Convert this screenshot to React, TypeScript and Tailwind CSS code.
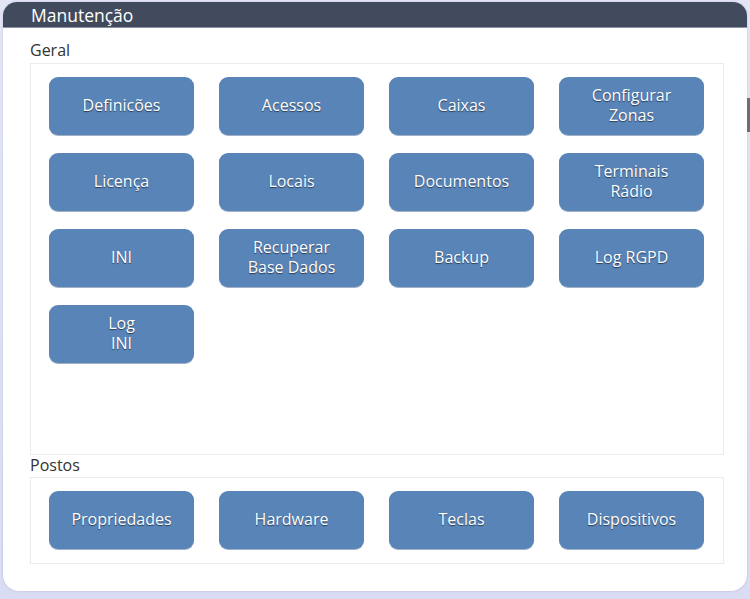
import React from "react";

const geral: string[][] = [
  ["Definicões"],
  ["Acessos"],
  ["Caixas"],
  ["Configurar", "Zonas"],
  ["Licença"],
  ["Locais"],
  ["Documentos"],
  ["Terminais", "Rádio"],
  ["INI"],
  ["Recuperar", "Base Dados"],
  ["Backup"],
  ["Log RGPD"],
  ["Log", "INI"],
];

const postos: string[][] = [["Propriedades"], ["Hardware"], ["Teclas"], ["Dispositivos"]];

function Tile({ lines }: { lines: string[] }) {
  return (
    <button className="h-[58px] w-[145px] rounded-[9px] bg-[#5984b8] shadow-[0_1px_0_#9fb0c8] flex flex-col items-center justify-center pb-[3px] text-white text-[16px] leading-[20px] [text-shadow:0_1px_1px_rgba(0,0,0,0.55)]">
      {lines.map((l) => (
        <span key={l}>{l}</span>
      ))}
    </button>
  );
}

export default function App() {
  return (
    <div
      className="w-[750px] h-[599px] overflow-hidden bg-gradient-to-b from-[#e4e6f6] to-[#d9dcf3] pt-[2px] px-[3px] relative"
      style={{ fontFamily: '"Open Sans", "Noto Sans", sans-serif' }}
    >
      <div className="absolute right-0 top-[98px] w-[3px] h-[34px] bg-[#6b6e78]" />
      <div className="h-[589px] bg-white rounded-t-[14px] rounded-b-[16px] flex flex-col overflow-hidden shadow-[0_0_2px_rgba(120,120,160,0.4)]">
        <div className="h-[26px] bg-[#414b5d] border-b border-[#8a93a3] flex items-center pl-[28px] pt-[2px] text-white text-[17.5px] leading-none">
          Manutenção
        </div>
        <div className="pl-[27px] pr-[23px] flex flex-col">
          <div className="text-[16px] text-[#333] leading-[20px] mt-[12px] mb-[3px]">Geral</div>
          <div className="h-[392px] border border-[#ebebeb] pl-[18px] pt-[13px]">
            <div className="grid grid-cols-[repeat(4,145px)] gap-x-[25px] gap-y-[18px]">
              {geral.map((lines) => (
                <Tile key={lines.join(" ")} lines={lines} />
              ))}
            </div>
          </div>
          <div className="text-[16px] text-[#333] leading-[20px] mt-[0px] mb-[2px]">Postos</div>
          <div className="h-[87px] border border-[#ebebeb] pl-[18px] pt-[13px]">
            <div className="grid grid-cols-[repeat(4,145px)] gap-x-[25px]">
              {postos.map((lines) => (
                <Tile key={lines.join(" ")} lines={lines} />
              ))}
            </div>
          </div>
        </div>
      </div>
    </div>
  );
}
